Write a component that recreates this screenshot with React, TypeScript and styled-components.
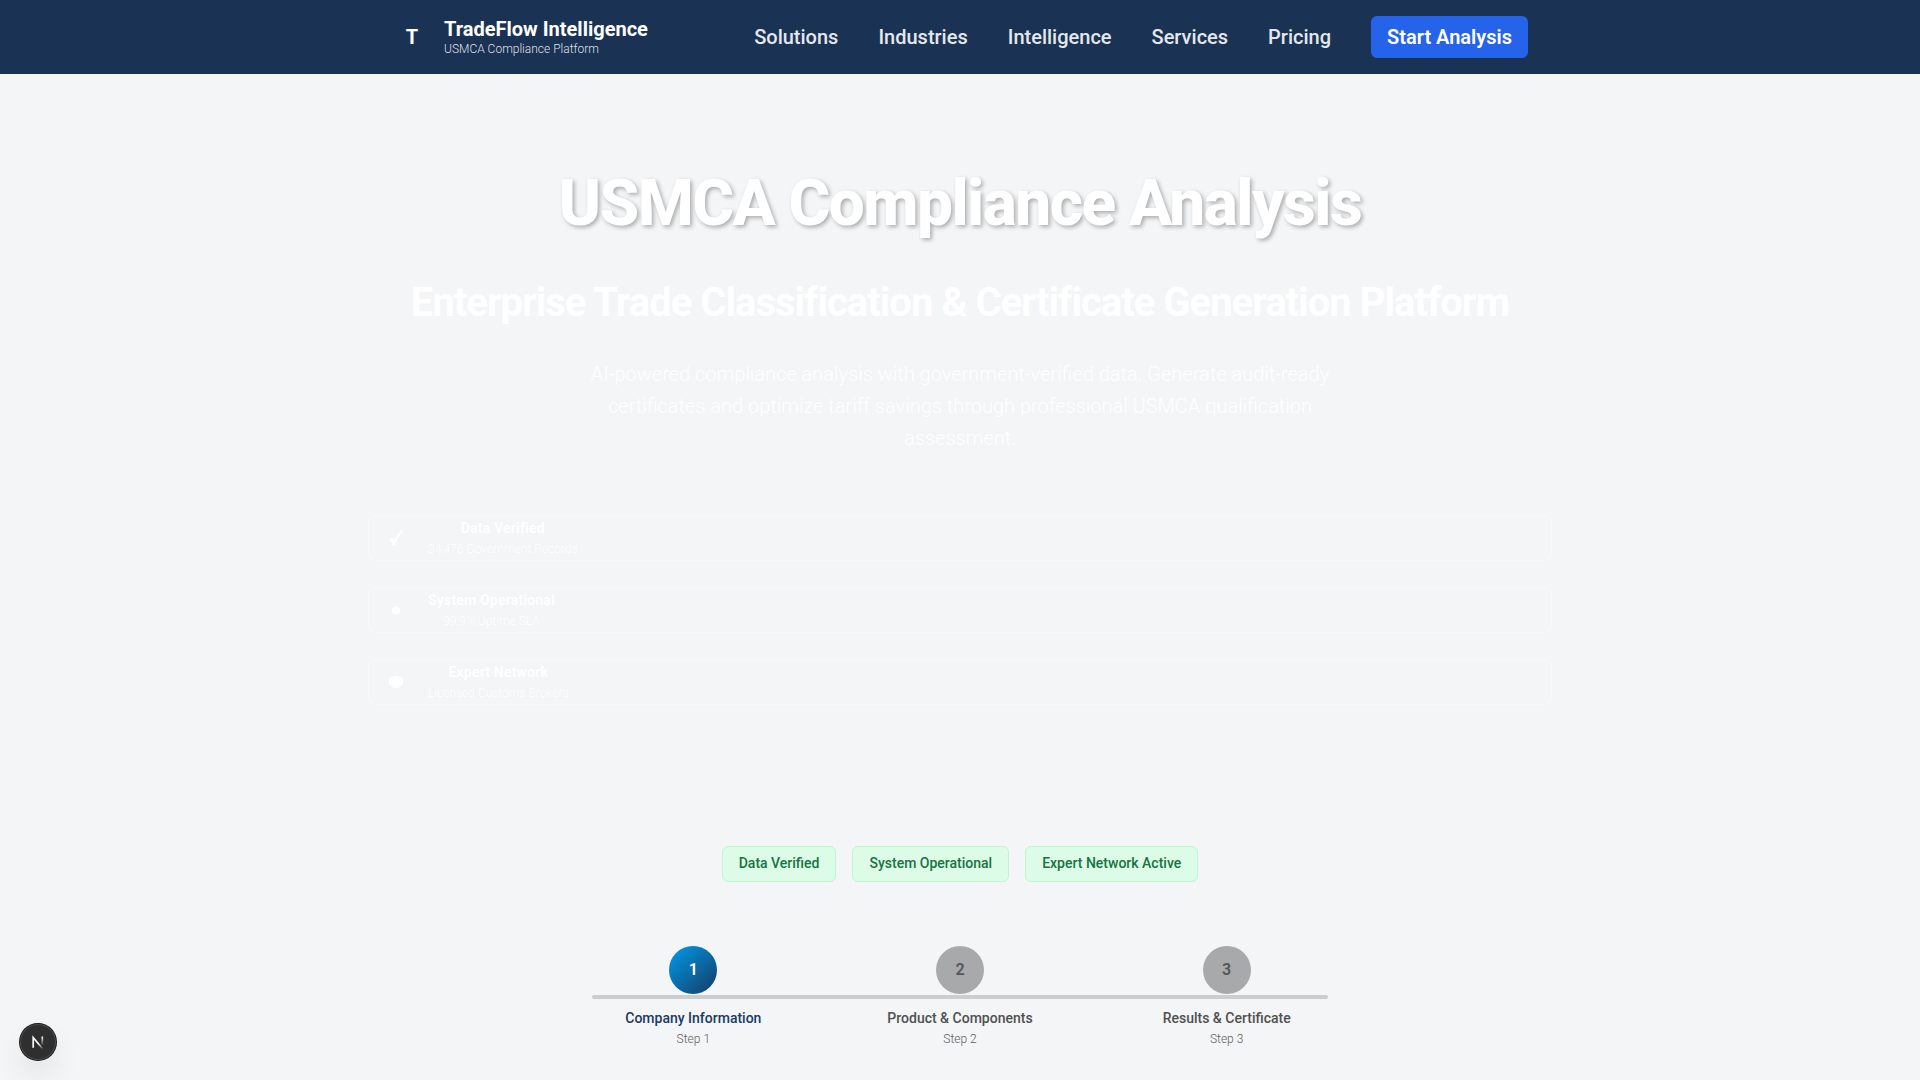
import React from "react";
import styled, { createGlobalStyle } from "styled-components";

const GlobalStyle = createGlobalStyle`
  * { box-sizing: border-box; margin: 0; padding: 0; }
  body {
    height: 1080px;
    overflow: hidden;
    background: #f3f5f7;
    font-family: Roboto, "Liberation Sans", sans-serif;
    font-size: 16px;
    line-height: 1.5;
  }
`;

const Header = styled.header`
  height: 74px;
  background: #1a3254;
`;

const HeaderInner = styled.div`
  width: 1200px;
  height: 100%;
  margin: 0 auto;
  padding: 0 32px;
  display: flex;
  align-items: center;
  justify-content: space-between;
`;

const Brand = styled.div`
  display: flex;
  align-items: center;
  gap: 12px;
`;

const Mark = styled.div`
  width: 40px;
  text-align: center;
  color: #fff;
  font-size: 20px;
  font-weight: 700;
`;

const BrandName = styled.div`
  color: #fff;
  font-size: 20px;
  line-height: 24px;
  font-weight: 700;
`;

const BrandTag = styled.div`
  color: rgba(255, 255, 255, 0.88);
  font-size: 12px;
  line-height: 16px;
  font-weight: 300;
`;

const Nav = styled.nav`
  display: flex;
  align-items: center;
  gap: 40px;
`;

const NavLink = styled.a`
  color: #e4e8ec;
  font-size: 20px;
  font-weight: 500;
`;

const StartButton = styled.a`
  height: 42px;
  padding: 0 16px;
  display: flex;
  align-items: center;
  border-radius: 6px;
  background: #2563eb;
  color: #fff;
  font-size: 20px;
  font-weight: 600;
`;

const Hero = styled.section`
  width: 1200px;
  margin: 0 auto;
  padding: 90px 8px 0;
  display: flex;
  flex-direction: column;
  align-items: center;
  text-align: center;
  color: #fff;
`;

const Title = styled.h1`
  font-size: 64px;
  line-height: 80px;
  font-weight: 800;
  letter-spacing: -1.6px;
  text-shadow: 2px 2px 4px rgba(0, 0, 0, 0.3);
`;

const Subtitle = styled.h2`
  margin-top: 35px;
  font-size: 40px;
  line-height: 48px;
  font-weight: 700;
  letter-spacing: -1px;
  white-space: nowrap;
`;

const Lead = styled.p`
  width: 768px;
  margin-top: 31px;
  font-size: 20px;
  line-height: 32px;
  font-weight: 300;
`;

const TrustList = styled.div`
  width: 100%;
  margin-top: 61px;
  display: grid;
  gap: 26px;
`;

const TrustCard = styled.div`
  height: 46px;
  padding: 0 15px;
  display: flex;
  align-items: center;
  gap: 20px;
  border: 1px solid rgba(255, 255, 255, 0.32);
  border-radius: 8px;
`;

const TrustIcon = styled.div`
  width: 24px;
  display: flex;
  justify-content: center;
`;

const TrustName = styled.div`
  font-size: 14px;
  line-height: 21px;
  font-weight: 700;
  letter-spacing: 0.18px;
`;

const TrustNote = styled.div`
  font-size: 12px;
  line-height: 20px;
  font-weight: 300;
`;

const Badges = styled.div`
  margin-top: 141px;
  display: flex;
  justify-content: center;
  gap: 16px;
`;

const Badge = styled.div`
  height: 36px;
  padding: 6px 16px;
  border: 1px solid #bbf7d0;
  border-radius: 6px;
  background: #dcfce7;
  color: #187341;
  font-size: 14px;
  line-height: 21px;
  font-weight: 500;
`;

const Stepper = styled.div`
  width: 800px;
  margin: 64px auto 0;
  display: grid;
  grid-template-columns: repeat(3, 1fr);
  justify-items: center;
`;

const Circle = styled.div<{ $active?: boolean }>`
  width: 48px;
  height: 48px;
  border-radius: 50%;
  display: flex;
  align-items: center;
  justify-content: center;
  background: ${(p) => (p.$active ? "linear-gradient(135deg, #009cea, #163a66)" : "#a7a9ab")};
  color: ${(p) => (p.$active ? "#fff" : "#54565a")};
  font-size: 16px;
  line-height: 22px;
  padding-bottom: 1px;
  font-weight: 600;
`;

const Track = styled.div`
  grid-column: 1 / -1;
  width: 736px;
  height: 4px;
  margin: 1px 0 8px;
  border-radius: 2px;
  background: #cbcdcf;
`;

const StepLabel = styled.div<{ $active?: boolean }>`
  color: ${(p) => (p.$active ? "#1a3a60" : "#505050")};
  font-size: 14px;
  line-height: 22px;
  font-weight: 500;
`;

const StepNote = styled.div`
  color: #5c5e60;
  font-size: 12px;
  line-height: 20px;
  font-weight: 300;
`;

const DevBadge = styled.div`
  position: fixed;
  left: 20px;
  top: 1024px;
  width: 36px;
  height: 36px;
  border-radius: 50%;
  display: flex;
  align-items: center;
  justify-content: center;
  background: #2f2f2f;
  box-shadow: inset 0 0 0 1px #4a4a4a, 0 0 0 1px #171717, 0 16px 32px -8px rgba(0, 0, 0, 0.24);
`;

const nav = ["Solutions", "Industries", "Intelligence", "Services", "Pricing"];

const trust = [
  {
    name: "Data Verified",
    note: "34,476 Government Records",
    icon: (
      <svg width="14" height="16" viewBox="0 0 14 16">
        <path d="M.3 8.800 3 7.500 5 10.300C7 6 9.500 2.500 12.800.5L13.900 1.200C10.500 5 8 9.600 6.300 14.300L3.700 15.200Z" fill="#fff" />
      </svg>
    ),
  },
  {
    name: "System Operational",
    note: "99.9% Uptime SLA",
    icon: (
      <svg width="10" height="10" viewBox="0 0 10 10">
        <circle cx="5" cy="5.500" r="4.2" fill="#fff" />
      </svg>
    ),
  },
  {
    name: "Expert Network",
    note: "Licensed Customs Brokers",
    icon: (
      <svg width="16" height="14" viewBox="0 0 16 14">
        <ellipse cx="8" cy="7" rx="7.200" ry="6.200" fill="#fff" />
        <circle cx="8" cy="7" r="4.800" fill="none" stroke="#f3f5f7" strokeWidth=".4" />
      </svg>
    ),
  },
];

const steps = ["Company Information", "Product & Components", "Results & Certificate"];

export default function App() {
  return (
    <>
      <GlobalStyle />
      <Header>
        <HeaderInner>
          <Brand>
            <Mark>T</Mark>
            <div>
              <BrandName>TradeFlow Intelligence</BrandName>
              <BrandTag>USMCA Compliance Platform</BrandTag>
            </div>
          </Brand>
          <Nav>
            {nav.map((n) => (
              <NavLink key={n}>{n}</NavLink>
            ))}
            <StartButton>Start Analysis</StartButton>
          </Nav>
        </HeaderInner>
      </Header>
      <Hero>
        <Title>USMCA Compliance Analysis</Title>
        <Subtitle>Enterprise Trade Classification &amp; Certificate Generation Platform</Subtitle>
        <Lead>
          AI-powered compliance analysis with government-verified data. Generate audit-ready
          certificates and optimize tariff savings through professional USMCA qualification
          assessment.
        </Lead>
        <TrustList>
          {trust.map((t) => (
            <TrustCard key={t.name}>
              <TrustIcon>{t.icon}</TrustIcon>
              <div>
                <TrustName>{t.name}</TrustName>
                <TrustNote>{t.note}</TrustNote>
              </div>
            </TrustCard>
          ))}
        </TrustList>
      </Hero>
      <Badges>
        <Badge>Data Verified</Badge>
        <Badge>System Operational</Badge>
        <Badge>Expert Network Active</Badge>
      </Badges>
      <Stepper>
        {steps.map((s, i) => (
          <Circle key={s} $active={i === 0}>
            {i + 1}
          </Circle>
        ))}
        <Track />
        {steps.map((s, i) => (
          <StepLabel key={s} $active={i === 0}>
            {s}
          </StepLabel>
        ))}
        {steps.map((s, i) => (
          <StepNote key={s}>Step {i + 1}</StepNote>
        ))}
      </Stepper>
      <DevBadge>
        <svg width="14" height="14" viewBox="0 0 14 14" fill="none">
          <defs>
            <linearGradient id="diag" x1="8" y1="8" x2="12.500" y2="13.500" gradientUnits="userSpaceOnUse">
              <stop stopColor="#fff" />
              <stop offset="1" stopColor="#fff" stopOpacity="0" />
            </linearGradient>
            <linearGradient id="stem" x1="11" y1="1" x2="11" y2="11" gradientUnits="userSpaceOnUse">
              <stop stopColor="#fff" />
              <stop offset="1" stopColor="#fff" stopOpacity="0" />
            </linearGradient>
          </defs>
          <path d="M2.200 12.800V2.500L11.800 14" stroke="url(#diag)" strokeWidth="1.700" />
          <path d="M11.300 1.500V10" stroke="url(#stem)" strokeWidth="1.700" />
        </svg>
      </DevBadge>
    </>
  );
}
